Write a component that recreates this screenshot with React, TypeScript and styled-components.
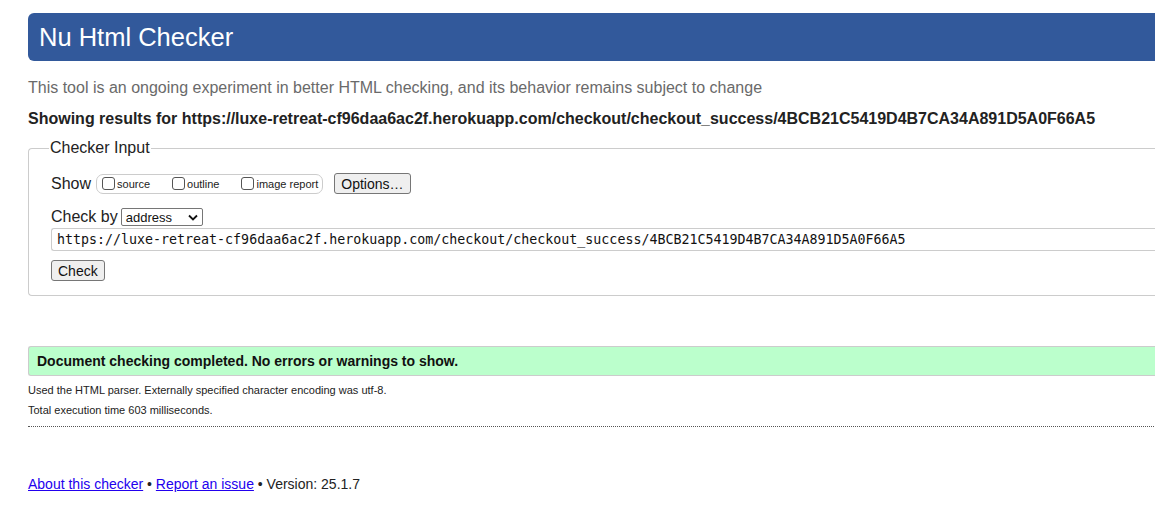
import React from "react";
import styled, { createGlobalStyle } from "styled-components";

const Global = createGlobalStyle`
  html, body {
    margin: 0;
    padding: 0;
    background: #fff;
    overflow: hidden;
  }
  body {
    font-family: "Liberation Sans", Arial, sans-serif;
    color: #222;
  }
`;

const Page = styled.div`
  width: 1200px;
  padding: 13px 0 0 28px;
`;

const Header = styled.h1`
  margin: 0;
  height: 48px;
  display: flex;
  align-items: center;
  padding-left: 11px;
  background: #32599b;
  color: #fff;
  font-size: 25.5px;
  font-weight: normal;
  border-radius: 6px 0 0 6px;
`;

const Intro = styled.p`
  margin: 18px 0 0;
  font-size: 16px;
  color: #6a6a6a;
`;

const Results = styled.p`
  margin: 13px 0 0;
  font-size: 16px;
  font-weight: bold;
  color: #222;
`;

const Fieldset = styled.fieldset`
  margin: 11px 0 0;
  padding: 4px 22px 14px 22px;
  border: 1px solid #ccc;
  border-radius: 4px 0 0 4px;
  border-right: none;
  min-width: 0;
`;

const Legend = styled.legend`
  font-size: 16px;
  padding: 0 1px;
  margin-left: -2px;
  color: #222;
`;

const Row = styled.div<{ $top: number }>`
  display: flex;
  align-items: center;
  margin-top: ${(p) => p.$top}px;
  font-size: 16px;
`;

const ShowGroup = styled.div`
  display: inline-flex;
  align-items: center;
  margin-left: 5px;
  height: 18px;
  padding: 0 4px 0 5px;
  border: 1px solid #ccc;
  border-radius: 7px;
`;

const CheckLabel = styled.label<{ $gap: number }>`
  display: inline-flex;
  align-items: center;
  font-size: 11px;
  margin-right: ${(p) => p.$gap}px;
  color: #222;
`;

const Box = styled.span`
  display: inline-block;
  width: 11px;
  height: 11px;
  border: 1px solid #555;
  border-radius: 3px;
  margin-right: 2px;
  background: #fff;
`;

const Button = styled.button<{ $left?: number }>`
  font-family: "Liberation Sans", Arial, sans-serif;
  font-size: 14px;
  color: #111;
  background: #efefef;
  border: 1px solid #767676;
  border-radius: 3px;
  padding: 1px 6px;
  height: 21px;
  margin-left: ${(p) => p.$left ?? 0}px;
`;

const Select = styled.div`
  display: inline-flex;
  align-items: center;
  justify-content: space-between;
  width: 82px;
  height: 18px;
  margin-left: 3px;
  padding: 0 4px;
  box-sizing: border-box;
  border: 1px solid #767676;
  border-radius: 2px;
  font-size: 13px;
  color: #111;
`;

const UrlInput = styled.div`
  margin-top: 2px;
  height: 21px;
  display: flex;
  align-items: center;
  padding-left: 5px;
  border: 1px solid #ccc;
  border-right: none;
  border-radius: 3px 0 0 3px;
  font-family: "DejaVu Sans Mono", "Liberation Mono", monospace;
  font-size: 13.3px;
  color: #111;
  white-space: nowrap;
`;

const Success = styled.div`
  margin-top: 50px;
  height: 28px;
  display: flex;
  align-items: center;
  padding-left: 8px;
  background: #bfc;
  border: 1px solid #ccc;
  border-right: none;
  border-radius: 3px 0 0 3px;
  font-size: 14px;
  font-weight: bold;
  color: #111;
`;

const Note = styled.p<{ $top: number }>`
  margin: ${(p) => p.$top}px 0 0;
  font-size: 11px;
  line-height: 13px;
  color: #222;
`;

const Divider = styled.hr`
  margin: 9px 0 0;
  border: none;
  border-top: 1px dotted #555;
`;

const Footer = styled.p`
  margin: 49px 0 0;
  font-size: 14px;
  color: #222;
`;

const Link = styled.a`
  color: #2200ee;
  text-decoration: underline;
`;

const Chevron = () => (
  <svg width="10" height="7" viewBox="0 0 10 7">
    <path d="M1 1.5 L5 5.5 L9 1.5" fill="none" stroke="#111" strokeWidth="1.8" />
  </svg>
);

const App = () => {
  const url =
    "https://luxe-retreat-cf96daa6ac2f.herokuapp.com/checkout/checkout_success/4BCB21C5419D4B7CA34A891D5A0F66A5";
  return (
    <Page>
      <Global />
      <Header>Nu Html Checker</Header>
      <Intro>This tool is an ongoing experiment in better HTML checking, and its behavior remains subject to change</Intro>
      <Results>Showing results for {url}</Results>
      <Fieldset>
        <Legend>Checker Input</Legend>
        <Row $top={12}>
          Show
          <ShowGroup>
            <CheckLabel $gap={22}><Box />source</CheckLabel>
            <CheckLabel $gap={22}><Box />outline</CheckLabel>
            <CheckLabel $gap={0}><Box />image report</CheckLabel>
          </ShowGroup>
          <Button $left={11}>Options…</Button>
        </Row>
        <Row $top={14}>
          Check by
          <Select>
            address
            <Chevron />
          </Select>
        </Row>
        <UrlInput>{url}</UrlInput>
        <Row $top={9}>
          <Button>Check</Button>
        </Row>
      </Fieldset>
      <Success>Document checking completed. No errors or warnings to show.</Success>
      <Note $top={8}>Used the HTML parser. Externally specified character encoding was utf-8.</Note>
      <Note $top={7}>Total execution time 603 milliseconds.</Note>
      <Divider />
      <Footer>
        <Link href="#">About this checker</Link> • <Link href="#">Report an issue</Link> • Version: 25.1.7
      </Footer>
    </Page>
  );
};

export default App;
